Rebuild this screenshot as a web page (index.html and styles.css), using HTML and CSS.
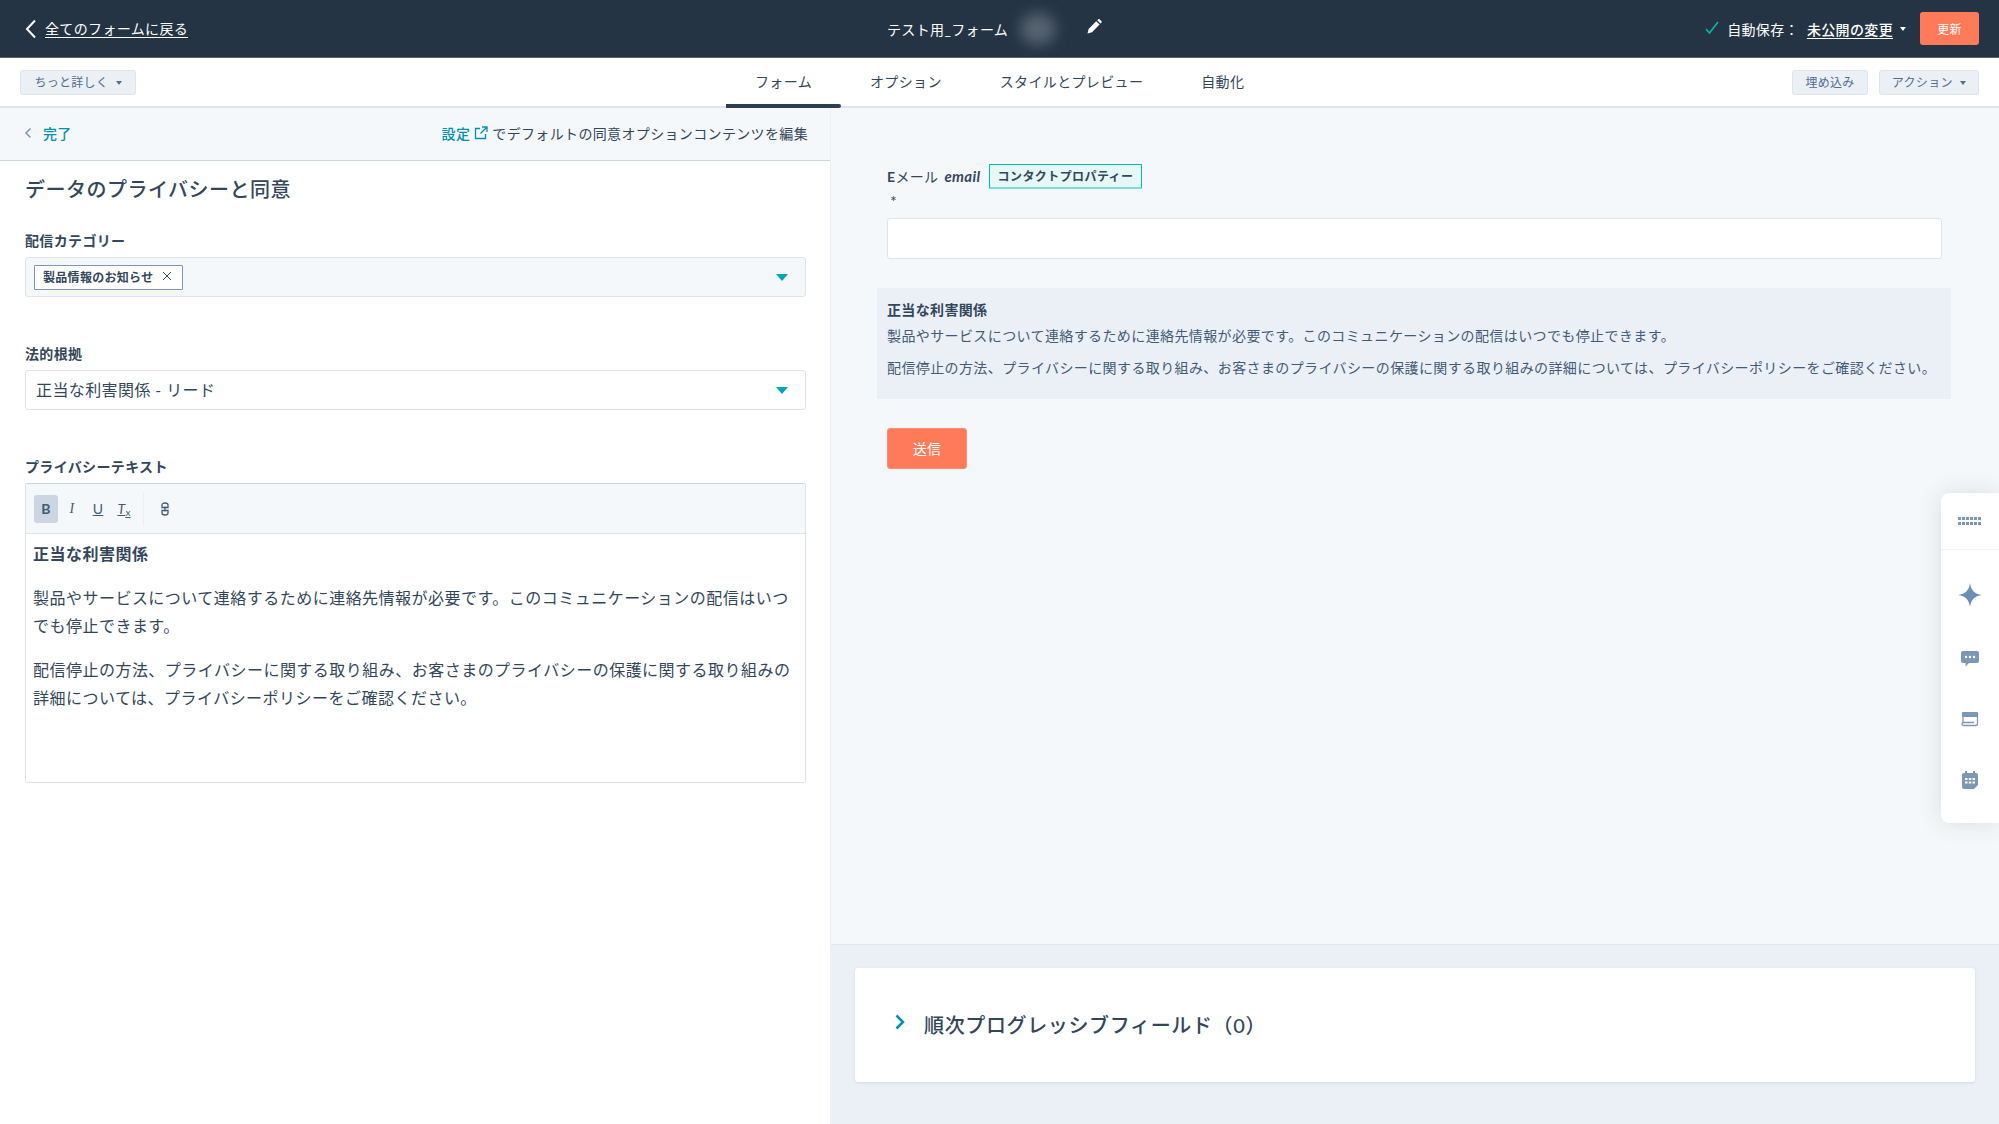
FILE: index.html
```html
<!DOCTYPE html>
<html lang="ja">
<head>
    <meta charset="UTF-8">
    <meta name="viewport" content="width=device-width, initial-scale=1.0">
    <title>フォーム編集</title>
    <link rel="stylesheet" href="styles.css">
</head>
<body>

    <header class="topbar">
        <div class="topbar-left">
            <svg class="back-icon" viewBox="0 0 12 20" width="12" height="20"><path d="M10 1.5 2 10l8 8.5" fill="none" stroke="#fff" stroke-width="2"/></svg>
            <a class="back-link">全てのフォームに戻る</a>
        </div>
        <div class="topbar-title">
            <span>テスト用_フォーム</span>
            <span class="blur-blob"></span>
            <svg class="pencil" viewBox="0 0 16 16" width="16" height="16"><path d="M1.5 14.5 2.6 10l7.6-7.8 3.4 3.4L6 13.3zM11.2 1.2l.9-.8c.5-.4 1.1-.4 1.6 0l1.7 1.7c.4.5.4 1.1 0 1.6l-.9.9z" fill="#fff"/></svg>
        </div>
        <div class="topbar-right">
            <svg class="check" viewBox="0 0 16 16" width="16" height="16"><path d="M2 9 5.500 13 14 2" fill="none" stroke="#00bda5" stroke-width="1.600"/></svg>
            <span class="save-label">自動保存：</span>
            <a class="changes-link">未公開の変更</a>
            <span class="caret caret-white"></span>
            <button class="btn-update">更新</button>
        </div>
    </header>

    <nav class="tabbar">
        <div class="tabbar-left">
            <button class="btn-light btn-more">ちっと詳しく <span class="caret caret-slate"></span></button>
        </div>
        <div class="tabs">
            <a class="tab active">フォーム</a>
            <a class="tab">オプション</a>
            <a class="tab">スタイルとプレビュー</a>
            <a class="tab">自動化</a>
        </div>
        <div class="tabbar-right">
            <button class="btn-light btn-embed">埋め込み</button>
            <button class="btn-light btn-action">アクション <span class="caret caret-slate"></span></button>
        </div>
    </nav>

    <main class="workspace">
        <section class="left-panel">
            <div class="sub-header">
                <a class="done-link">
                    <svg viewBox="0 0 8 12" width="8" height="12"><path d="M6.5 1.5 2 6l4.5 4.5" fill="none" stroke="#7c98b6" stroke-width="1.5"/></svg>
                    完了
                </a>
                <div class="settings-note">
                    <a class="settings-link">設定</a>
                    <svg viewBox="0 0 14 14" width="14" height="14"><path d="M6 2.500H1.500v10h10V8M8 1h5v5M13 1 6.500 7.500" fill="none" stroke="#0091ae" stroke-width="1.300"/></svg>
                    <span>でデフォルトの同意オプションコンテンツを編集</span>
                </div>
            </div>

            <div class="form-body">
                <h2>データのプライバシーと同意</h2>

                <div class="field">
                    <label>配信カテゴリー</label>
                    <div class="select select-tinted">
                        <span class="tag">製品情報のお知らせ <svg viewBox="0 0 10 10" width="10" height="10"><path d="M1 1l8 8M9 1 1 9" stroke="#33475b" stroke-width="1"/></svg></span>
                        <span class="select-arrow"></span>
                    </div>
                </div>

                <div class="field">
                    <label>法的根拠</label>
                    <div class="select">
                        <span class="select-value">正当な利害関係 - リード</span>
                        <span class="select-arrow"></span>
                    </div>
                </div>

                <div class="field">
                    <label>プライバシーテキスト</label>
                    <div class="editor">
                        <div class="toolbar">
                            <span class="tool tool-on tool-b">B</span>
                            <span class="tool tool-i">I</span>
                            <span class="tool tool-u">U</span>
                            <span class="tool tool-t">T<small>x</small></span>
                            <span class="tool-sep"></span>
                            <span class="tool tool-link">
                                <svg viewBox="0 0 8 14" width="8" height="14"><path d="M1 5.500V3C1 1.700 2.400 1 4 1s3 .7 3 2v2.500H1zM1 8.500V11c0 1.300 1.400 2 3 2s3-.7 3-2V8.500H1zM4 4.500v5" fill="none" stroke="#425b76" stroke-width="1.300"/></svg>
                            </span>
                        </div>
                        <div class="editor-body">
                            <p><strong>正当な利害関係</strong></p>
                            <p>製品やサービスについて連絡するために連絡先情報が必要です。このコミュニケーションの配信はいつでも停止できます。</p>
                            <p>配信停止の方法、プライバシーに関する取り組み、お客さまのプライバシーの保護に関する取り組みの詳細については、プライバシーポリシーをご確認ください。</p>
                        </div>
                    </div>
                </div>
            </div>
        </section>

        <section class="right-panel">
            <div class="preview">
                <div class="preview-label">
                    <span><b>E</b>メール <em>email</em></span>
                    <span class="prop-tag">コンタクトプロパティー</span>
                </div>
                <div class="required">*</div>
                <div class="preview-input"></div>
                <div class="notice">
                    <strong>正当な利害関係</strong>
                    <p class="notice-first">製品やサービスについて連絡するために連絡先情報が必要です。このコミュニケーションの配信はいつでも停止できます。</p>
                    <p>配信停止の方法、プライバシーに関する取り組み、お客さまのプライバシーの保護に関する取り組みの詳細については、プライバシーポリシーをご確認ください。</p>
                </div>
                <button class="btn-submit">送信</button>
            </div>
            <div class="progressive">
                <div class="progressive-card">
                    <svg viewBox="0 0 10 16" width="10" height="16"><path d="M1.500 1.500 8 8l-6.500 6.500" fill="none" stroke="#0091ae" stroke-width="2.500"/></svg>
                    <h3>順次プログレッシブフィールド（0）</h3>
                </div>
            </div>
        </section>

        <aside class="side-rail">
            <div class="rail-top">
                <svg viewBox="0 0 24 9" width="24" height="9" fill="#7c98b6">
                    <rect x="0" y="0" width="3" height="3"/><rect x="4" y="0" width="3" height="3"/><rect x="8" y="0" width="3" height="3"/><rect x="12" y="0" width="3" height="3"/><rect x="16" y="0" width="3" height="3"/><rect x="20" y="0" width="3" height="3"/>
                    <rect x="0" y="5" width="3" height="3"/><rect x="4" y="5" width="3" height="3"/><rect x="8" y="5" width="3" height="3"/><rect x="12" y="5" width="3" height="3"/><rect x="16" y="5" width="3" height="3"/><rect x="20" y="5" width="3" height="3"/>
                </svg>
            </div>
            <div class="rail-icons">
                <svg viewBox="0 0 24 24" width="24" height="24"><path d="M12 0c1 7 4 11 12 12-8 1-11 5-12 12-1-7-4-11-12-12 8-1 11-5 12-12z" fill="#6a8fb5"/></svg>
                <svg viewBox="0 0 18 16" width="18" height="16"><path d="M2 0h14a2 2 0 0 1 2 2v8a2 2 0 0 1-2 2H8l-3.500 3.500V12H2a2 2 0 0 1-2-2V2a2 2 0 0 1 2-2z" fill="#7c98b6"/><circle cx="5" cy="6" r="1.200" fill="#fff"/><circle cx="9" cy="6" r="1.200" fill="#fff"/><circle cx="13" cy="6" r="1.200" fill="#fff"/></svg>
                <svg viewBox="0 0 18 16" width="18" height="16"><path d="M1 2a1 1 0 0 1 1-1h14a1 1 0 0 1 1 1v4H1z" fill="#7c98b6"/><path d="M2 1.500v10.500M16.500 2v10.500a2 2 0 0 1-2 2H2.500a1.500 1.500 0 0 1 0-3H13" fill="none" stroke="#7c98b6" stroke-width="1.300"/></svg>
                <svg viewBox="0 0 16 18" width="16" height="18"><path d="M3 0h2v2h6V0h2v2h1a2 2 0 0 1 2 2v10l-4 4H2a2 2 0 0 1-2-2V4a2 2 0 0 1 2-2h1z" fill="#7c98b6"/><g fill="#fff"><rect x="3" y="7" width="2.500" height="2"/><rect x="6.800" y="7" width="2.500" height="2"/><rect x="10.500" y="7" width="2.500" height="2"/><rect x="3" y="10.500" width="2.500" height="2"/><rect x="6.800" y="10.500" width="2.500" height="2"/><rect x="10.500" y="10.500" width="2.500" height="2"/></g></svg>
            </div>
        </aside>
    </main>

</body>
</html>
```

FILE: styles.css
```css
html, body {
    height: 100%;
}
body {
    margin: 0;
    background-color: #fff;
    color: #33475b;
    font-family: 'Lato', 'Noto Sans CJK JP', sans-serif;
    font-size: 14px;
    overflow: hidden;
    display: flex;
    flex-direction: column;
}
/* the japanese runs a bit wider in the original */
body * {
    letter-spacing: .025em;
}
button {
    font-family: inherit;
    cursor: pointer;
}
p {
    margin: 0;
}

/* top bar */
.topbar {
    height: 57px;
    flex: none;
    background-color: #253445;
    color: #fff;
    display: flex;
    align-items: center;
}
.topbar-left {
    width: 887px;
    flex: none;
    padding-left: 25px;
    box-sizing: border-box;
    display: flex;
    align-items: center;
    gap: 8px;
}
.back-link {
    text-decoration: underline;
    text-underline-offset: 3px;
    margin-bottom: 1px;
}
.topbar-title {
    display: flex;
    align-items: center;
}
.blur-blob {
    width: 36px;
    height: 32px;
    margin-left: 12px;
    margin-right: 30px;
    background-color: #56636f;
    border-radius: 50%;
    filter: blur(7px);
}
.pencil {
    margin-top: -4px;
}
.topbar-right {
    margin-left: auto;
    padding-right: 20px;
    display: flex;
    align-items: center;
}
.check {
    margin-top: -2px;
}
.save-label {
    margin-left: 7px;
    margin-right: 8px;
}
.changes-link {
    font-weight: 500;
    text-decoration: underline;
    text-underline-offset: 3px;
}
.caret {
    display: inline-block;
    width: 0;
    height: 0;
    border-left: 3.5px solid transparent;
    border-right: 3.5px solid transparent;
    border-top: 4px solid;
    vertical-align: middle;
}
.caret-white {
    color: #fff;
    margin-left: 7px;
    margin-right: 14px;
}
.caret-slate {
    color: #516f90;
    margin-left: 4px;
}
.btn-update {
    width: 59px;
    height: 33px;
    padding: 0;
    border: 0;
    border-radius: 3px;
    background-color: #ff7a59;
    color: #fff;
    font-size: 12px;
}

/* tabs */
.tabbar {
    height: 51px;
    flex: none;
    box-sizing: border-box;
    border-top: 1px solid #59636f;
    border-bottom: 2px solid #dfe3eb;
    display: flex;
    align-items: stretch;
}
.tabbar-left {
    width: 726px;
    flex: none;
    padding-left: 20px;
    box-sizing: border-box;
    display: flex;
    align-items: center;
}
.tabs {
    display: flex;
}
.tab {
    padding: 0 29px 2px;
    display: flex;
    align-items: center;
    position: relative;
}
.tab.active::after {
    content: "";
    position: absolute;
    left: 0;
    right: 0;
    bottom: -2px;
    height: 4px;
    background-color: #2d3e50;
    border-radius: 0 2px 2px 0;
}
.tabbar-right {
    margin-left: auto;
    padding-right: 20px;
    display: flex;
    align-items: center;
    gap: 11px;
}
.btn-light {
    height: 25px;
    padding: 0 0 2px;
    background-color: #eaf0f6;
    border: 1px solid #dfe3eb;
    border-radius: 3px;
    color: #506e91;
    font-size: 12px;
}
.btn-more {
    width: 116px;
}
.btn-embed {
    width: 76px;
}
.btn-action {
    width: 100px;
}

/* main area */
.workspace {
    flex: 1;
    min-height: 0;
    display: flex;
    position: relative;
}
.left-panel {
    width: 831px;
    flex: none;
    box-sizing: border-box;
    border-right: 1px solid #eaf0f6;
}
.sub-header {
    height: 53px;
    box-sizing: border-box;
    background-color: #f5f8fa;
    border-bottom: 1px solid #cbd6e2;
    padding: 0 22px 3px 24px;
    display: flex;
    align-items: center;
    justify-content: space-between;
}
.done-link {
    color: #0091ae;
    font-weight: 500;
    display: flex;
    align-items: center;
    gap: 11px;
}
.settings-note {
    display: flex;
    align-items: center;
    gap: 4px;
    color: #33475b;
}
.settings-link {
    color: #0091ae;
    font-weight: 500;
}
.form-body {
    padding: 14px 24px 0 25px;
}
h2 {
    margin: 0 0 28px;
    font-size: 20px;
    font-weight: 500;
    line-height: 28px;
}
.field {
    margin-bottom: 47px;
}
.field label {
    display: block;
    margin-bottom: 6px;
    font-weight: 700;
    line-height: 20px;
}
.select {
    height: 40px;
    box-sizing: border-box;
    border: 1px solid #dfe3eb;
    border-radius: 3px;
    padding: 0 17px 0 10px;
    display: flex;
    align-items: center;
    justify-content: space-between;
}
.select-tinted {
    background-color: #f5f8fa;
    padding-left: 8px;
}
.select-value {
    font-size: 16px;
    margin-bottom: 2px;
}
.select-arrow {
    width: 0;
    height: 0;
    border-left: 6px solid transparent;
    border-right: 6px solid transparent;
    border-top: 7px solid #00a4bd;
}
.tag {
    height: 25px;
    box-sizing: border-box;
    background-color: #fff;
    border: 1px solid #7c98b6;
    border-radius: 1px;
    padding: 0 10px 2px 8px;
    font-size: 12px;
    font-weight: 700;
    display: flex;
    align-items: center;
    gap: 9px;
    white-space: nowrap;
}
.editor {
    height: 300px;
    box-sizing: border-box;
    border: 1px solid #dfe3eb;
    border-top-color: #cbd6e2;
    border-radius: 2px;
}
.toolbar {
    height: 50px;
    box-sizing: border-box;
    background-color: #f5f8fa;
    border-bottom: 1px solid #dfe3eb;
    padding-left: 8px;
    display: flex;
    align-items: center;
}
.tool {
    width: 24px;
    height: 28px;
    margin-right: 2px;
    border-radius: 3px;
    color: #425b76;
    display: flex;
    align-items: center;
    justify-content: center;
    font-size: 14px;
}
.tool-on {
    background-color: #cbd6e2;
}
.tool-b {
    font-weight: 700;
}
.tool-i {
    font-family: 'Liberation Serif', serif;
    font-style: italic;
}
.tool-u {
    text-decoration: underline;
}
.tool-t {
    text-decoration: underline;
    font-style: italic;
}
.tool-t small {
    font-size: 10px;
    font-style: normal;
    margin-top: 6px;
}
.tool-sep {
    width: 1px;
    height: 34px;
    margin: 0 6px 0 5px;
    background-color: #eaf0f6;
}
.tool-link {
    margin-left: 3px;
}
.editor-body {
    padding: 6px 8px 0 7px;
    font-size: 16px;
    line-height: 28px;
}
.editor-body p, .editor-body strong {
    letter-spacing: .03em;
}
.editor-body p {
    margin-bottom: 16px;
}

/* right side */
.right-panel {
    flex: 1;
    min-width: 0;
    background-color: #f5f8fa;
    display: flex;
    flex-direction: column;
}
.preview {
    flex: 1;
    padding: 56px 57px 0 56px;
}
.preview-label {
    height: 25px;
    display: flex;
    align-items: center;
    gap: 8px;
}
.preview-label span:first-child {
    margin-bottom: 2px;
}
.preview-label b {
    font-weight: 700;
}
.preview-label em {
    font-size: 15px;
    font-weight: 700;
    margin-left: 2px;
}
.prop-tag {
    height: 25px;
    box-sizing: border-box;
    padding: 0 8px 2px;
    background-color: #e5f8f6;
    border: 1px solid #00bda5;
    border-bottom-width: 2px;
    border-bottom-color: #7fded2;
    border-radius: 1px;
    font-size: 12px;
    font-weight: 700;
    letter-spacing: .035em;
    display: flex;
    align-items: center;
    white-space: nowrap;
}
.required {
    height: 20px;
    margin-bottom: 9px;
    padding-left: 3px;
    font-size: 16px;
    line-height: 24px;
}
.preview-input {
    height: 41px;
    box-sizing: border-box;
    background-color: #fff;
    border: 1px solid #dfe3eb;
    border-radius: 3px;
}
.notice {
    margin: 29px -9px 0 -10px;
    padding: 12px 10px 21px;
    background-color: #eaf0f6;
    line-height: 20px;
    white-space: nowrap;
}
.notice strong {
    display: block;
    font-weight: 700;
}
.notice p {
    margin-top: 12px;
    color: #425b76;
    letter-spacing: .028em;
}
.notice .notice-first {
    margin-top: 6px;
}
.btn-submit {
    display: block;
    width: 80px;
    height: 41px;
    margin-top: 29px;
    padding: 0 0 2px;
    background-color: #ff7a59;
    border: 1px solid #ff8f73;
    border-radius: 3px;
    color: #fff;
    font-size: 14px;
}
.progressive {
    height: 180px;
    flex: none;
    box-sizing: border-box;
    background-color: #eaf0f6;
    border-top: 1px solid #e2e8ef;
    padding: 23px 24px 42px;
}
.progressive-card {
    height: 114px;
    box-sizing: border-box;
    background-color: #fff;
    border-radius: 3px;
    box-shadow: 0 1px 3px rgba(45, 62, 80, .12);
    padding-left: 40px;
    padding-bottom: 2px;
    display: flex;
    align-items: center;
    gap: 19px;
}
.progressive-card svg {
    margin-top: -5px;
}
h3 {
    margin: 0;
    font-size: 20px;
    font-weight: 500;
    letter-spacing: .032em;
}

/* floating rail on the right edge */
.side-rail {
    position: absolute;
    right: 0;
    top: 385px;
    width: 58px;
    height: 330px;
    background-color: #fff;
    border-radius: 8px 0 0 8px;
    box-shadow: 0 0 24px rgba(45, 62, 80, .14);
}
.rail-top {
    height: 57px;
    box-sizing: border-box;
    border-bottom: 1px solid #f0f3f7;
    display: flex;
    align-items: center;
    justify-content: center;
}
.rail-icons {
    padding-top: 33px;
    display: flex;
    flex-direction: column;
    align-items: center;
    gap: 44px;
}
```
